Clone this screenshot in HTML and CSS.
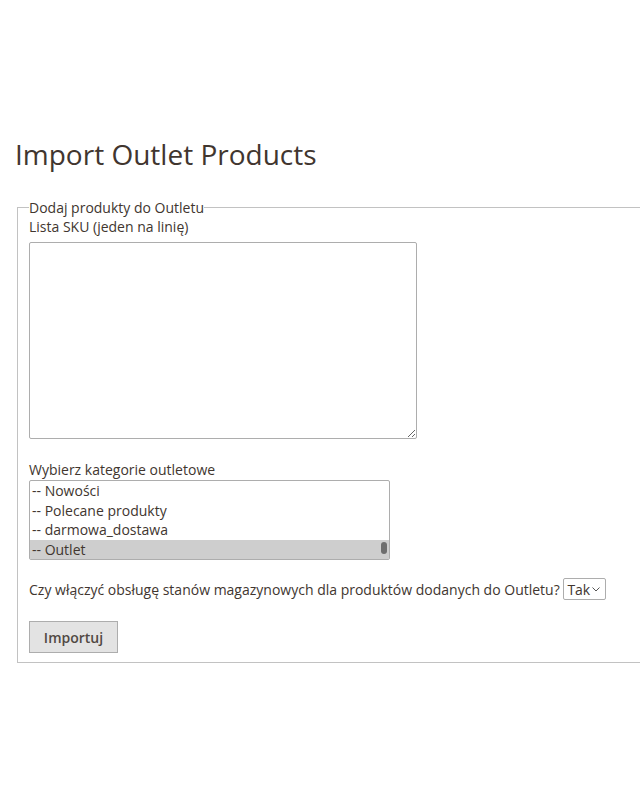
FILE: index.html
```html
<!DOCTYPE html>
<html>
<head>
<meta charset="utf-8">
<meta name="viewport" content="width=device-width, initial-scale=1.0">
<title>Import Outlet Products</title>
<link rel="stylesheet" href="styles.css">
</head>
<body>
    <div class="page">
        <h1 class="title">Import Outlet Products</h1>
        <form class="import-form" onsubmit="return false">
            <fieldset class="box">
                <legend>Dodaj produkty do Outletu</legend>
                <div class="field">
                    <label for="sku">Lista SKU (jeden na linię)</label>
                    <textarea id="sku" class="sku"></textarea>
                </div>
                <div class="field">
                    <label for="cats" class="tight">Wybierz kategorie outletowe</label>
                    <div class="list-wrap">
                        <select id="cats" class="cats" multiple size="4">
                            <option>-- Nowości</option>
                            <option>-- Polecane produkty</option>
                            <option>-- darmowa_dostawa</option>
                            <option selected>-- Outlet</option>
                        </select>
                        <span class="thumb"></span>
                    </div>
                </div>
                <div class="field">
                    <label for="stock" class="inline">Czy włączyć obsługę stanów magazynowych dla produktów dodanych do Outletu?</label>
                    <span class="yesno">
                        <select id="stock" class="small">
                            <option>Tak</option>
                            <option>Nie</option>
                        </select>
                        <svg class="chev" width="8" height="5" viewBox="0 0 8 5"><path d="M0.5 0.5 L4 4 L7.5 0.5" fill="none" stroke="#555" stroke-width="1"/></svg>
                    </span>
                </div>
                <button class="btn" type="submit">Importuj</button>
            </fieldset>
        </form>
    </div>
</body>
</html>
```

FILE: styles.css
```css
*{
    font-family: 'Open Sans', 'Liberation Sans', sans-serif;
    box-sizing: border-box;
}
body{
    margin:0;
    background:white;
    color:#41362f;
    font-size:14px;
}
.page{
    padding:135px 0 0 15px;
    overflow:hidden;
}
.title{
    margin:0 0 25px;
    font-size:28px;
    font-weight:400;
    line-height:normal;
    color:#41362f;
}
.box{
    width:700px;
    margin:0 2px;
    padding:0 11px 9px;
    border:1px solid #c2c2c2;
}
.box > legend{
    padding:0;
    font-size:14px;
}
.field{
    margin-bottom:21px;
}
.field > label{
    display:block;
    margin-bottom:6px;
}
.field > label.tight{
    margin-bottom:1px;
}
.field > label.inline{
    display:inline;
    margin:0;
}
.field:nth-child(3){
    margin-bottom:19px;
}
.sku{
    display:block;
    width:388px;
    height:197px;
    border:1px solid #adadad;
    border-radius:2px;
    resize:vertical;
}
.list-wrap{
    position:relative;
    width:361px;
    margin-bottom:-1px;
}
.cats{
    display:block;
    width:361px;
    height:80px;
    padding:0;
    border:1px solid #adadad;
    border-radius:2px;
    font-size:14px;
    color:#41362f;
    overflow:hidden;
}
.cats option{
    height:19.5px;
    padding:0 2px;
}
.cats option:checked{
    background:#cecece linear-gradient(#cecece,#cecece);
    color:#41362f;
}
.thumb{
    position:absolute;
    right:3px;
    bottom:6px;
    width:6px;
    height:12px;
    border-radius:3px;
    background:#6e6e6e;
}
.yesno{
    position:relative;
    display:inline-block;
}
.small{
    appearance:none;
    width:43px;
    height:22px;
    padding:0 0 0 3px;
    border:1px solid #adadad;
    border-radius:2px;
    background:white;
    font-size:14px;
    color:#41362f;
}
.chev{
    position:absolute;
    right:6px;
    top:9px;
    pointer-events:none;
}
.btn{
    width:89px;
    height:32px;
    border:1px solid #adadad;
    background:#e3e3e3;
    font-size:14px;
    font-weight:600;
    color:#514943;
    cursor:pointer;
}
.btn:hover{
    background:#dbdbdb;
}
```
